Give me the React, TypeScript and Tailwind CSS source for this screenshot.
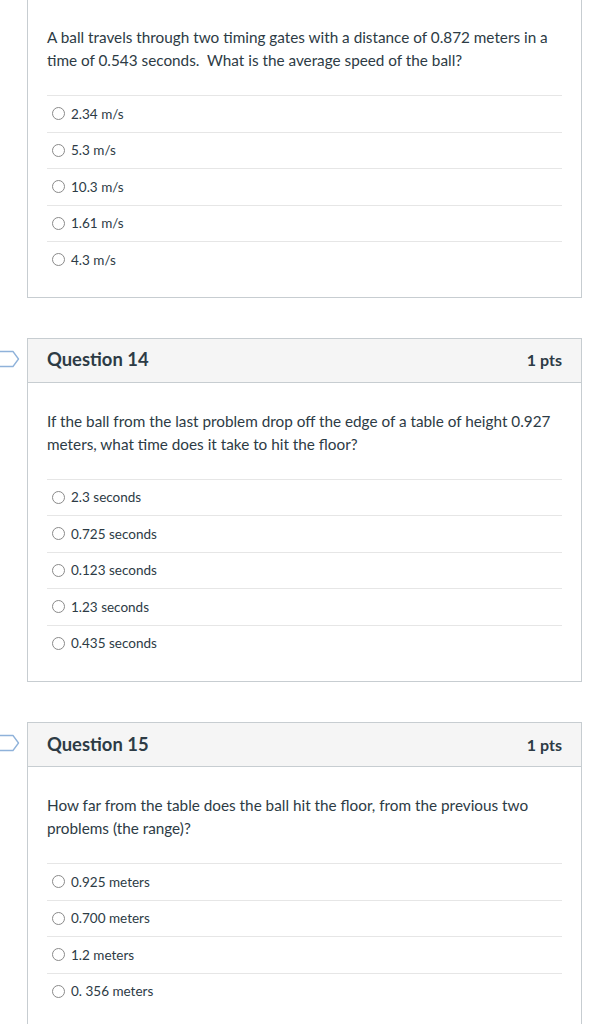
import React from 'react'

type Q = { num?: number; text: string[]; answers: string[]; top?: boolean }

const questions: Q[] = [
  {
    top: true,
    text: [
      'A ball travels through two timing gates with a distance of 0.872 meters in a',
      'time of 0.543 seconds.  What is the average speed of the ball?',
    ],
    answers: ['2.34 m/s', '5.3 m/s', '10.3 m/s', '1.61 m/s', '4.3 m/s'],
  },
  {
    num: 14,
    text: [
      'If the ball from the last problem drop off the edge of a table of height 0.927',
      'meters, what time does it take to hit the floor?',
    ],
    answers: ['2.3 seconds', '0.725 seconds', '0.123 seconds', '1.23 seconds', '0.435 seconds'],
  },
  {
    num: 15,
    text: [
      'How far from the table does the ball hit the floor, from the previous two',
      'problems (the range)?',
    ],
    answers: ['0.925 meters', '0.700 meters', '1.2 meters', '0. 356 meters'],
  },
]

function Flag() {
  return (
    <svg width="20" height="18" viewBox="0 0 20 18" className="absolute left-0 top-[12px]">
      <path d="M-1 1.5 H13 L18.5 9 L13 16.5 H-1" fill="white" stroke="#8fb2da" strokeWidth="1.3" strokeLinejoin="round" />
    </svg>
  )
}

function Radio() {
  return <span className="inline-block w-[13px] h-[13px] rounded-full border border-[#8a8a8a] bg-white shrink-0" />
}

function Card({ q }: { q: Q }) {
  return (
    <div className="relative">
      {q.num && <Flag />}
      <div className={`ml-[27px] mr-[9px] border border-[#c7cdd1] bg-white ${q.top ? 'border-t-0' : ''}`}>
        {q.num && (
          <div className="h-[44px] bg-[#f5f5f5] border-b border-[#c7cdd1] flex items-center justify-between px-[19px] text-[#2d3b45]">
            <span className="text-[18.4px] font-bold">Question {q.num}</span>
            <span className="text-[16px] font-bold">1 pts</span>
          </div>
        )}
        <div className={`px-[19px] ${q.top ? 'pt-[26px] pb-[19px]' : 'pt-[27px] pb-[20px]'}`}>
          <div className="text-[15.3px] leading-[23px] text-[#2d3b45] whitespace-pre">
            {q.text.map((t) => (
              <div key={t}>{t}</div>
            ))}
          </div>
          <div className="mt-[23px]">
            {q.answers.map((a) => (
              <div key={a} className="h-[36.5px] border-t border-[#e6e6e6] flex items-center gap-[6px] pl-[5px] text-[13.5px] text-[#2d3b45]">
                <Radio />
                <span>{a}</span>
              </div>
            ))}
          </div>
        </div>
      </div>
    </div>
  )
}

export default function App() {
  return (
    <div className="w-[591px] min-h-[1024px] bg-white font-['Lato','Noto_Sans',sans-serif] flex flex-col gap-[40px]">
      {questions.map((q, i) => (
        <Card key={i} q={q} />
      ))}
    </div>
  )
}
